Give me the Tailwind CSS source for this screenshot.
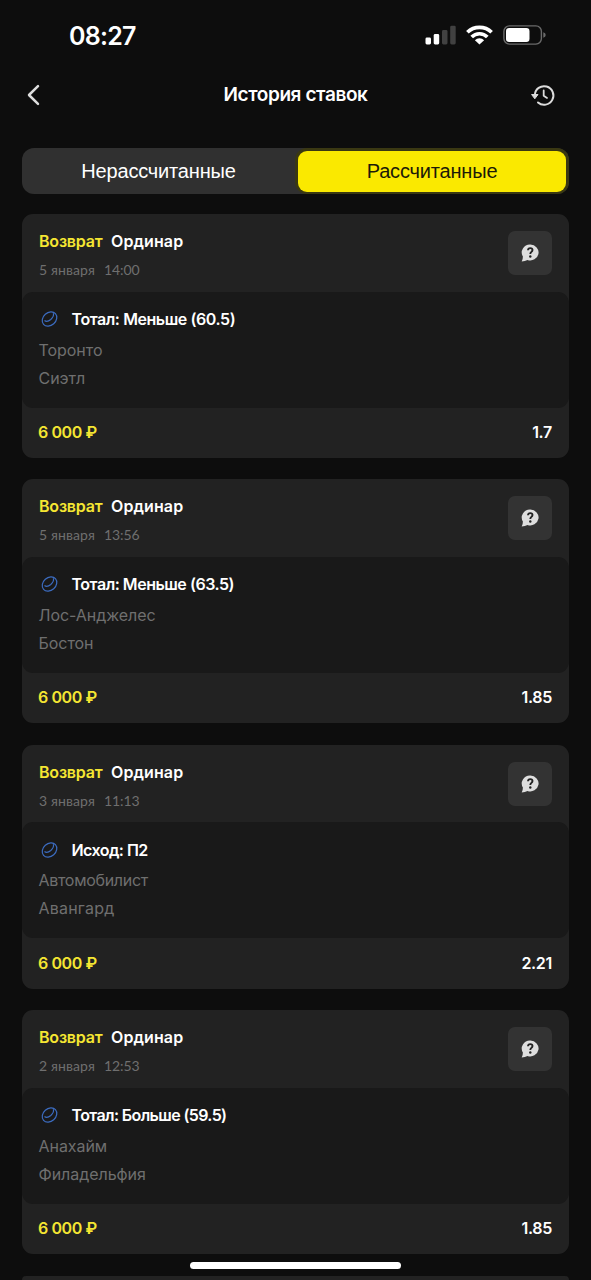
<!DOCTYPE html>
<html lang="ru">
<head>
<meta charset="utf-8">
<title>История ставок</title>
<script src="https://cdn.jsdelivr.net/npm/@tailwindcss/browser@4"></script>
</head>
<body class="relative h-[1280px] overflow-hidden bg-[#0d0d0d] font-['Inter',sans-serif] text-white">

<!-- Status bar -->
<header class="flex h-[70px] items-center justify-between pl-[69px] pr-[45px]">
  <span class="pt-[2px] text-[25px] font-semibold leading-[30px] tracking-[-0.75px]">08:27</span>
  <div class="flex items-center">
    <svg class="h-[20px] w-[31px]" viewBox="0 0 31 20">
      <rect x="0.5" y="12.5" width="5.5" height="7" rx="1.4" fill="#fff"/>
      <rect x="8.7" y="9" width="5.5" height="10.5" rx="1.4" fill="#fff"/>
      <rect x="17" y="5" width="5.5" height="14.5" rx="1.4" fill="#414141"/>
      <rect x="25.2" y="0.7" width="5.5" height="18.8" rx="1.4" fill="#414141"/>
    </svg>
    <svg class="ml-[10px] h-[20px] w-[27px]" viewBox="0 0 27 20">
      <g fill="none" stroke="#fff" stroke-width="3.7">
        <path d="M1.4 7.3A17.3 17.3 0 0 1 25.6 7.3"/>
        <path d="M5.7 12A11 11 0 0 1 21.3 12"/>
      </g>
      <path d="M13.5 19.5L8.900 15.200A6.500 6.500 0 0 1 18.100 15.200Z" fill="#fff"/>
    </svg>
    <svg class="ml-[10px] h-[20px] w-[43px]" viewBox="0 0 43 20">
      <rect x="0.9" y="0.9" width="37.5" height="18.2" rx="5.5" fill="none" stroke="#6a6a6a" stroke-width="1.4"/>
      <rect x="3" y="3" width="23.5" height="14" rx="3.2" fill="#fff"/>
      <path d="M40.3 7.2Q42.7 8 42.700 10T40.300 12.800Z" fill="#6a6a6a"/>
    </svg>
  </div>
</header>

<!-- Title bar -->
<nav class="flex h-[50px] items-center justify-between pl-[26px] pr-[35px]">
  <svg class="h-[22px] w-[26px] shrink-0" viewBox="0 0 26 22"><path d="M12 2.2L3 11L12 19.8" fill="none" stroke="#dedede" stroke-width="2.5" stroke-linecap="round" stroke-linejoin="round"/></svg>
  <h1 class="ml-[9px] text-[19px] font-semibold leading-[24px] tracking-[-0.4px]">История ставок</h1>
  <svg class="h-[24px] w-[26px] shrink-0" viewBox="0 0 26 24">
    <g fill="none" stroke="#dcdcdc" stroke-width="2" stroke-linecap="round" stroke-linejoin="round">
      <path d="M4.800 12A9.300 9.300 0 1 1 8 19.500"/>
      <path d="M13.700 7.500V12.700L17 14.900" stroke-width="1.800"/>
    </g>
    <path d="M1.600 11.500H8L4.800 15.800Z" fill="#dcdcdc" stroke="#dcdcdc" stroke-linejoin="round"/>
  </svg>
</nav>

<!-- Tabs -->
<div class="mx-[22px] mt-[28px] flex h-[46px] rounded-[12px] bg-[#303030] font-['Liberation_Sans',sans-serif] text-[20px] tracking-[-0.18px]">
  <div class="flex w-[273px] items-center justify-center">Нерассчитанные</div>
  <div class="flex flex-1 items-stretch rounded-[12px] bg-[#3a3812] py-[2.5px] pl-[3px] pr-[3px]">
    <div class="flex flex-1 items-center justify-center rounded-[9px] bg-[#fae900] text-[#1c1a08]">Рассчитанные</div>
  </div>
</div>

<!-- Bet cards -->
<main id="bets" class="mx-[22px] mt-[20px] flex h-[1066px] flex-col gap-[21.4px] overflow-hidden"></main>

<!-- Home indicator -->
<div class="absolute left-[190px] top-[1262px] h-[7px] w-[211px] rounded-full bg-white"></div>

<script>
const bets = [
  { date: '5 января', time: '14:00', pick: 'Тотал: Меньше (60.5)', pickCls: 'tracking-[-0.43px]', a: 'Торонто', b: 'Сиэтл', odds: '1.7' },
  { date: '5 января', time: '13:56', pick: 'Тотал: Меньше (63.5)', pickCls: 'tracking-[-0.47px]', a: 'Лос-Анджелес', b: 'Бостон', odds: '1.85' },
  { date: '3 января', time: '11:13', pick: 'Исход: П2', pickCls: 'tracking-[-0.55px]', a: 'Автомобилист', aCls: 'tracking-[-0.3px]', b: 'Авангард', bCls: 'tracking-[0.2px]', odds: '2.21' },
  { date: '2 января', time: '12:53', pick: 'Тотал: Больше (59.5)', pickCls: 'tracking-[-0.62px]', a: 'Анахайм', b: 'Филадельфия', odds: '1.85' },
];
const card = (x) => `
<article class="h-[244px] shrink-0 rounded-[11px] bg-[#222222]">
  <div class="flex h-[77.5px] justify-between pl-[17px] pr-[17px] pt-[17px]">
    <div>
      <div class="flex gap-[8px] text-[16px] font-semibold leading-[20px]">
        <span class="w-[64px] whitespace-nowrap tracking-[-0.2px] text-[#f5e632]">Возврат</span><span class="tracking-[0.1px]">Ординар</span>
      </div>
      <div class="mt-[9px] flex font-['Lato',sans-serif] text-[14px] leading-[20px] text-[#6f6f6f]">
        <span class="w-[65px] tracking-[0.1px]">${x.date}</span><span class="tracking-[-0.1px]">${x.time}</span>
      </div>
    </div>
    <div class="flex size-[44px] items-center justify-center rounded-[7px] bg-[#333333]">
      <svg class="size-[18px]" viewBox="0 0 18 18">
        <path d="M9.300 0.600A8.200 7.900 0 1 1 6.500 15.900Q4 17.200 0.700 17.400Q1.900 15.500 1.900 12.500A8.200 7.900 0 0 1 9.300 0.600Z" fill="#dedede"/>
        <path d="M7 6.300Q7.100 4.100 9.300 4.100T11.500 6.100Q11.500 7.300 10.300 8Q9.300 8.600 9.300 10" fill="none" stroke="#222" stroke-width="1.900"/>
        <circle cx="9.300" cy="12.500" r="1.200" fill="#222"/>
      </svg>
    </div>
  </div>
  <div class="h-[116px] rounded-[11px] bg-[#191919] pl-[16.500px] pt-[17.500px]">
    <div class="flex h-[20px] items-center text-[16px] font-semibold leading-[20px]">
      <svg class="ml-[2px] mr-[14px] h-[16px] w-[17px]" viewBox="0 0 17 16">
        <g fill="none" stroke="#3c6cc0" stroke-width="1.200">
          <ellipse cx="8.500" cy="8" rx="8" ry="6.300" transform="rotate(-42 8.500 8)"/>
          <path d="M3.500 9.500Q6 11.600 9.800 8.500Q13.400 5.200 12.300 2.300"/>
        </g>
      </svg>
      <span class="${x.pickCls}">${x.pick}</span>
    </div>
    <div class="mt-[6.500px] text-[16px] leading-[28px] tracking-[-0.050px] text-[#6f6f6f]">
      <p class="${x.aCls || ''}">${x.a}</p>
      <p class="${x.bCls || ''}">${x.b}</p>
    </div>
  </div>
  <div class="flex h-[49px] items-center justify-between pl-[16px] pr-[17px] text-[16px] font-semibold">
    <span class="tracking-[-0.400px] text-[#f5e632]">6 000 ₽</span><span class="tracking-[-0.300px]">${x.odds}</span>
  </div>
</article>`;
document.getElementById('bets').innerHTML = bets.map(card).join('') + '<div class="h-[4px] shrink-0 rounded-t-[11px] bg-[#222222]"></div>';
</script>
</body>
</html>
